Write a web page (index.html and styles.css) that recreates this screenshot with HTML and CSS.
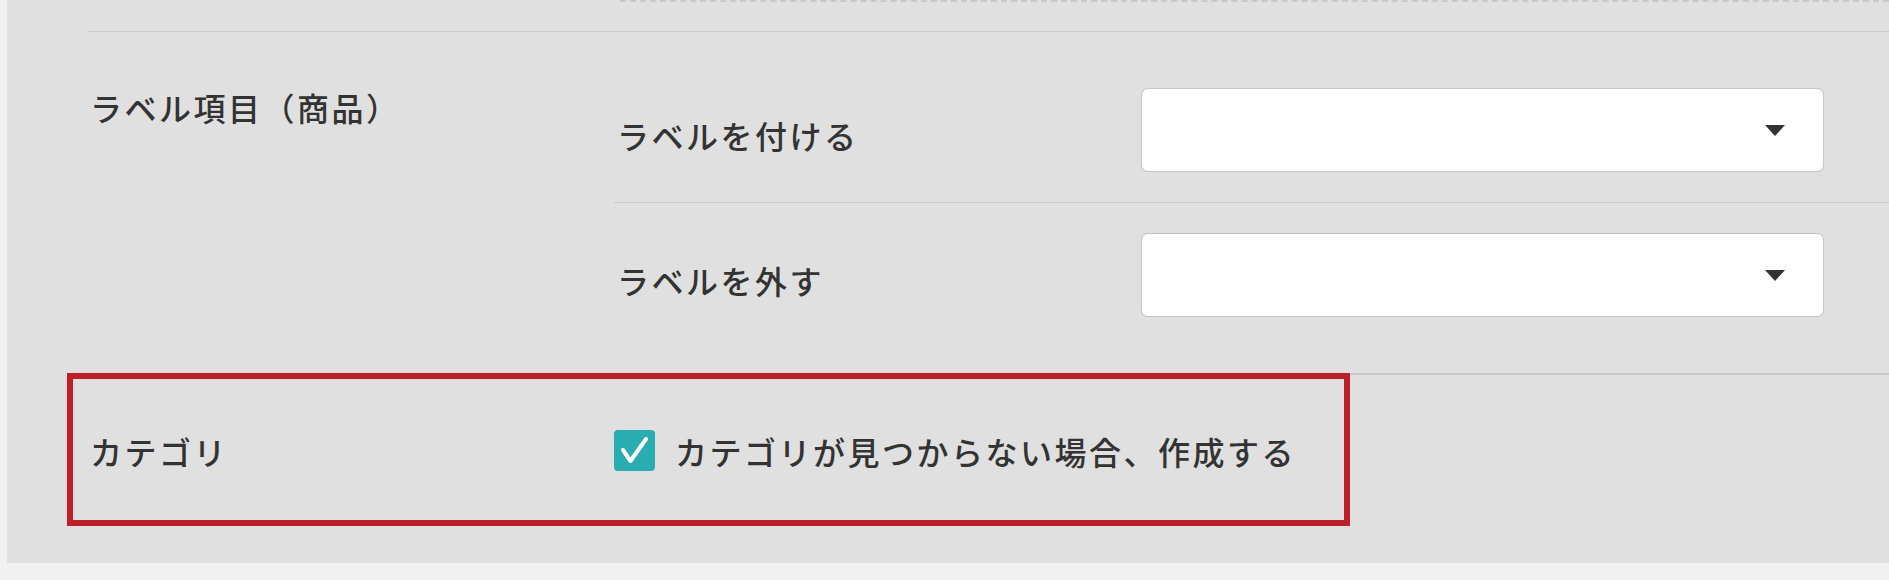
FILE: index.html
```html
<!DOCTYPE html>
<html lang="ja">
<head>
<meta charset="utf-8">
<link rel="stylesheet" href="styles.css">
</head>
<body>
<div class="wrap">
  <div class="card">
    <div class="prev"><div class="prev-line"></div></div>

    <div class="row row-labels">
      <div class="row-title">ラベル項目（商品）</div>
      <div class="row-body">
        <div class="sub">
          <div class="sub-label">ラベルを付ける</div>
          <div class="select"><span class="caret"></span></div>
        </div>
        <div class="sub">
          <div class="sub-label">ラベルを外す</div>
          <div class="select"><span class="caret"></span></div>
        </div>
      </div>
    </div>

    <div class="row row-category">
      <div class="row-title">カテゴリ</div>
      <div class="row-body">
        <label class="check">
          <span class="box">
            <svg viewBox="0 0 41 41" width="41" height="41"><polyline points="9,20 16.5,31 32,9" fill="none" stroke="#ffffff" stroke-width="4" stroke-linecap="round" stroke-linejoin="round"/></svg>
          </span>
          <span class="check-text">カテゴリが見つからない場合、作成する</span>
        </label>
      </div>
      <div class="highlight"></div>
    </div>
  </div>
</div>
</body>
</html>
```

FILE: styles.css
```css
* { box-sizing: border-box; }

html, body {
  margin: 0;
  padding: 0;
}

body {
  background: #f1f1f1;
  font-family: "Noto Sans CJK JP", "Noto Sans", sans-serif;
  color: #333333;
  overflow: hidden;
}

.wrap {
  background: #f1f1f1;
  padding-left: 7px;
  padding-bottom: 17px;
  height: 580px;
}

.card {
  background: #e0e0e0;
  height: 563px;
  padding-left: 81px;
  padding-bottom: 37px;
}

.prev {
  padding-left: 532px;
  height: 31px;
}

.prev-line {
  border-top: 2px dashed #c9c9c9;
}

.row {
  display: grid;
  grid-template-columns: 526px 1fr;
  border-top: 1px solid #c9c9c9;
  position: relative;
}

.row-labels {
  padding: 26px 0;
}

.row-title {
  font-size: 32px;
  letter-spacing: 2.5px;
  font-weight: 500;
  padding-left: 2px;
  line-height: 44px;
}

.row-labels .row-title {
  padding-top: 27px;
}

.sub {
  display: flex;
  align-items: center;
  padding: 30px 65px 30px 0;
}

.sub + .sub {
  border-top: 1px solid #c9c9c9;
}

.sub-label {
  width: 527px;
  padding-left: 3px;
  padding-top: 10px;
  font-size: 32px;
  letter-spacing: 2.5px;
  font-weight: 500;
  line-height: 44px;
}

.select {
  width: 683px;
  height: 84px;
  background: #ffffff;
  border: 1px solid #c6c6c6;
  box-shadow: 0 0 1px #c6c6c6;
  border-radius: 7px;
  display: flex;
  align-items: center;
  justify-content: flex-end;
  padding-right: 38px;
}

.caret {
  width: 0;
  height: 0;
  border-left: 10px solid transparent;
  border-right: 10px solid transparent;
  border-top: 11px solid #333333;
}

.row-category {
  height: 153px;
  align-items: center;
  border-top-width: 2px;
}

.check {
  display: flex;
  align-items: center;
  gap: 20px;
}

.box {
  width: 41px;
  height: 41px;
  background: #29adb1;
  border-radius: 4px;
  display: block;
}

.box svg { display: block; }

.check-text {
  font-size: 32px;
  letter-spacing: 2.5px;
  font-weight: 500;
  line-height: 44px;
}

.highlight {
  position: absolute;
  left: -21px;
  top: -2px;
  width: 1283px;
  height: 153px;
  border: 6px solid #bd1f28;
  pointer-events: none;
}
```
